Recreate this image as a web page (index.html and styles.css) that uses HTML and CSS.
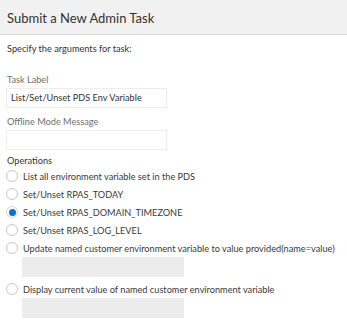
FILE: index.html
```html
<!DOCTYPE html>
<html lang="en">
<head>
<meta charset="UTF-8">
<title>Submit a New Admin Task</title>
<link rel="stylesheet" href="styles.css">
</head>
<body>

<div class="dialog-header">Submit a New Admin Task</div>

<div class="dialog-body">
  <p class="intro">Specify the arguments for task:</p>

  <div class="field">
    <label class="field-label">Task Label</label>
    <div class="text-box">List/Set/Unset PDS Env Variable</div>
  </div>

  <div class="field">
    <label class="field-label">Offline Mode Message</label>
    <div class="text-box"></div>
  </div>

  <div class="operations">
    <div class="ops-label">Operations</div>
    <div class="radio-row"><span class="radio"></span>List all environment variable set in the PDS</div>
    <div class="radio-row"><span class="radio"></span>Set/Unset RPAS_TODAY</div>
    <div class="radio-row"><span class="radio checked"></span>Set/Unset RPAS_DOMAIN_TIMEZONE</div>
    <div class="radio-row"><span class="radio"></span>Set/Unset RPAS_LOG_LEVEL</div>
    <div class="radio-row"><span class="radio"></span>Update named customer environment variable to value provided(name=value)</div>
    <div class="disabled-box"></div>
    <div class="radio-row spaced"><span class="radio"></span>Display current value of named customer environment variable</div>
    <div class="disabled-box"></div>
  </div>
</div>

</body>
</html>
```

FILE: styles.css
```css
body {
  margin: 0;
  font-family: 'Lato', 'Noto Sans', sans-serif;
  font-size: 9.2px;
  color: #333;
  background: #fff;
}

.dialog-header {
  height: 35px;
  box-sizing: border-box;
  padding: 1px 7px 0;
  display: flex;
  align-items: center;
  background: #f1f1f1;
  border-bottom: 1px solid #dadada;
  font-size: 13px;
  color: #333;
}

.dialog-body {
  padding: 0 7px;
}

.intro {
  margin: 8px 0 0;
  line-height: 12px;
}

.field {
  margin-top: 19px;
}

.field + .field {
  margin-top: 8px;
}

.field-label {
  display: block;
  color: #707070;
  line-height: 12px;
  margin-bottom: 2px;
}

.text-box {
  width: 161px;
  height: 20px;
  box-sizing: border-box;
  margin-left: -1px;
  padding: 0 4px;
  border: 1px solid #ececec;
  line-height: 18px;
  white-space: nowrap;
  color: #333;
}

.operations {
  margin-top: 5px;
}

.ops-label {
  line-height: 12px;
}

.radio-row {
  display: flex;
  align-items: center;
  height: 18px;
  gap: 5px;
  color: #3a3a3a;
  white-space: nowrap;
}

.radio-row.spaced {
  margin-top: 3px;
}

.radio {
  width: 10px;
  height: 10px;
  margin-left: -1px;
  border: 1px solid #c6c6c6;
  border-radius: 50%;
  background: #fff;
  flex-shrink: 0;
  position: relative;
}

.radio.checked {
  border-color: #d4d4d4;
}

.radio.checked::after {
  content: '';
  position: absolute;
  left: 1.5px;
  top: 1.5px;
  width: 7px;
  height: 7px;
  border-radius: 50%;
  background: #0572ce;
}

.disabled-box {
  width: 162px;
  height: 20px;
  margin-left: 15px;
  background: #ececec;
}
```
